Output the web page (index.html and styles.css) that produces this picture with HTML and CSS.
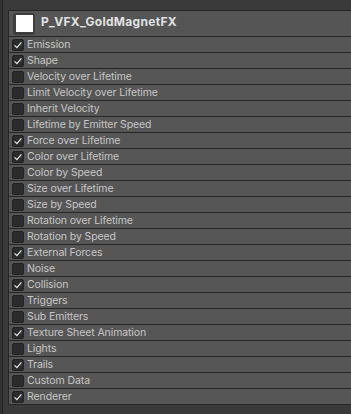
FILE: index.html
```html
<!DOCTYPE html>
<html lang="en">
<head>
    <meta charset="UTF-8">
    <title>Particle System Modules</title>
    <link rel="stylesheet" href="styles.css">
</head>
<body>
    <div class="gutter"></div>
    <div class="inspector">
        <div class="panel">
            <div class="header">
                <div class="swatch"><div class="swatch-fill"></div></div>
                <span class="title">P_VFX_GoldMagnetFX</span>
            </div>
            <div id="modules"></div>
        </div>
    </div>
    <script>
        const modules = [
            ['Emission', true],
            ['Shape', true],
            ['Velocity over Lifetime', false],
            ['Limit Velocity over Lifetime', false],
            ['Inherit Velocity', false],
            ['Lifetime by Emitter Speed', false],
            ['Force over Lifetime', true],
            ['Color over Lifetime', true],
            ['Color by Speed', false],
            ['Size over Lifetime', false],
            ['Size by Speed', false],
            ['Rotation over Lifetime', false],
            ['Rotation by Speed', false],
            ['External Forces', true],
            ['Noise', false],
            ['Collision', true],
            ['Triggers', false],
            ['Sub Emitters', false],
            ['Texture Sheet Animation', true],
            ['Lights', false],
            ['Trails', true],
            ['Custom Data', false],
            ['Renderer', true]
        ];

        const check = '<svg viewBox="0 0 12 12" width="12" height="12"><path d="M2.6 6.4 L4.9 8.6 L9.4 3.4" fill="none" stroke="#e6e6e6" stroke-width="1.3"/></svg>';

        const list = document.getElementById('modules');
        modules.forEach(([name, on]) => {
            const row = document.createElement('div');
            row.className = 'row';
            row.innerHTML = `<span class="box">${on ? check : ''}</span><span class="label">${name}</span>`;
            list.appendChild(row);
        });
    </script>
</body>
</html>
```

FILE: styles.css
```css
body {
    margin: 0;
    background-color: #383838;
    font-family: Inter, "Noto Sans", sans-serif;
    display: flex;
    height: 414px;
    overflow: hidden;
}
.gutter {
    width: 2px;
    background-color: #323232;
    border-right: 1px solid #232323;
    flex-shrink: 0;
}
.inspector {
    flex: 1;
    padding: 10px 0 0 5px;
    background-color: #3a3a3a;
}
.panel {
    border-left: 1px solid #262626;
    border-top: 1px solid #262626;
    border-bottom: 1px solid #262626;
}
.header {
    height: 25px;
    background-color: #555555;
    display: flex;
    align-items: center;
    gap: 6px;
    padding-left: 4px;
}
.swatch {
    width: 22px;
    height: 22px;
    border-radius: 3px;
    background-color: #3e3e3e;
    display: flex;
    align-items: center;
    justify-content: center;
}
.swatch-fill {
    width: 17px;
    height: 17px;
    background-color: #ffffff;
}
.title {
    color: #e2e2e2;
    font-weight: bold;
    font-size: 12px;
    letter-spacing: 0.3px;
    margin-top: -5px;
}
.row {
    height: 15px;
    border-top: 1px solid #262626;
    background-color: #565656;
    display: flex;
    align-items: center;
    padding-left: 3px;
}
.box {
    width: 12px;
    height: 12px;
    box-sizing: border-box;
    background-color: #2b2b2b;
    border: 1px solid #222222;
    border-radius: 2px;
    display: flex;
    align-items: center;
    justify-content: center;
}
.box svg {
    flex-shrink: 0;
}
.label {
    color: #c6c6c6;
    font-size: 10.5px;
    letter-spacing: -0.1px;
    margin-left: 3px;
}
```
